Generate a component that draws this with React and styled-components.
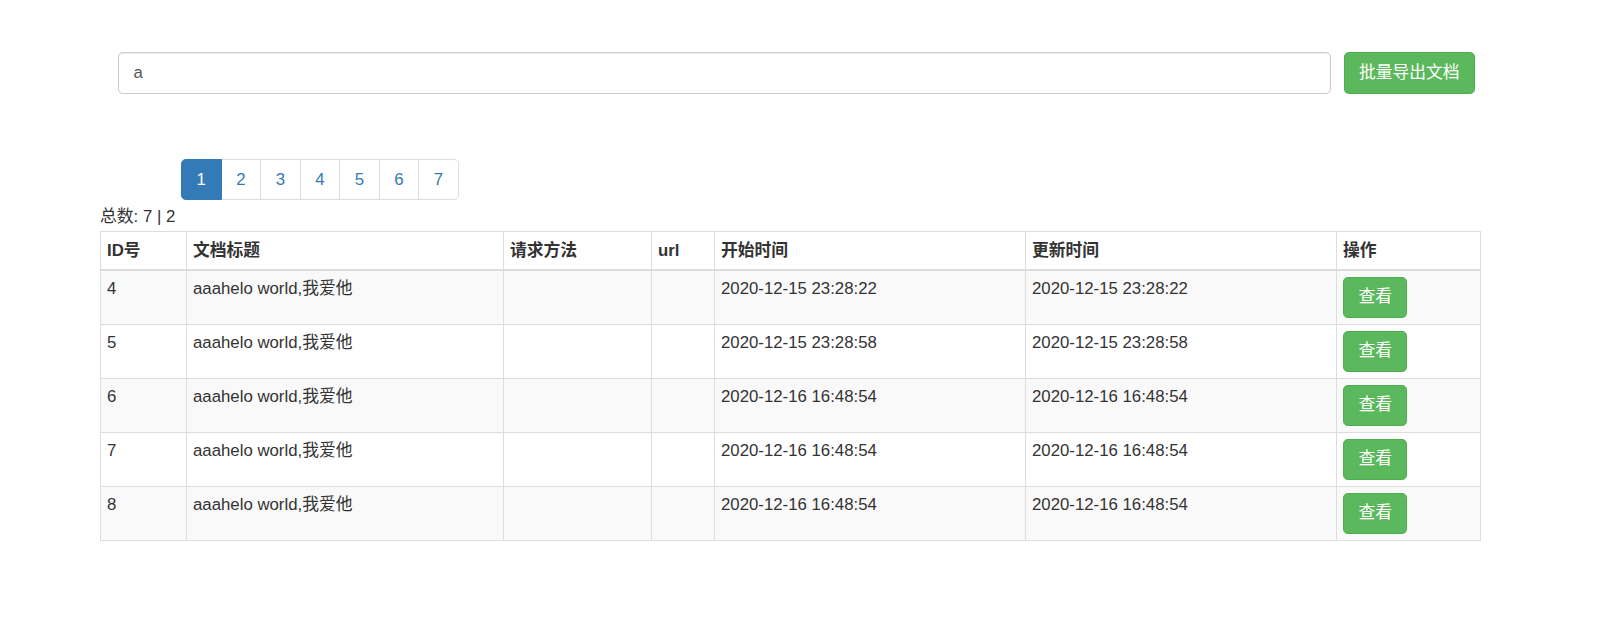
import React, { useState } from "react";
import styled, { createGlobalStyle } from "styled-components";

const GlobalStyle = createGlobalStyle`
  html, body {
    margin: 0;
    padding: 0;
    background: #fff;
  }
  body {
    font-family: "Liberation Sans", Arial, "Noto Sans CJK SC", sans-serif;
    font-size: 16.8px;
    line-height: 24px;
    color: #333;
  }
  * {
    box-sizing: border-box;
  }
`;

const Page = styled.div`
  padding-top: 52px;
  width: 1618px;
`;

const SearchRow = styled.div`
  display: flex;
  gap: 13px;
  margin-left: 118px;
  width: 1357px;
`;

const SearchInput = styled.input`
  flex: 1;
  height: 42px;
  padding: 7px 14.4px;
  font-family: inherit;
  font-size: 16.8px;
  color: #555;
  background: #fff;
  border: 1px solid #ccc;
  border-radius: 4.8px;
  box-shadow: inset 0 1px 1px rgba(0, 0, 0, 0.075);
  outline: none;

  &:focus {
    border-color: #66afe9;
  }
`;

const SuccessButton = styled.button`
  height: ${(p) => (p.$small ? "41px" : "42px")};
  padding: 0 14.4px;
  font-family: inherit;
  font-size: 16.8px;
  line-height: 24px;
  color: #fff;
  background-color: #5cb85c;
  border: 1.2px solid #4cae4c;
  border-radius: 4.8px;
  white-space: nowrap;
  cursor: pointer;

  &:hover {
    background-color: #449d44;
  }
`;

const Pagination = styled.ul`
  display: flex;
  list-style: none;
  margin: 65px 0 5px 181px;
  padding: 0;
`;

const PageItem = styled.li`
  & + & a {
    margin-left: -1px;
  }

  &:first-child a {
    border-radius: 4.8px 0 0 4.8px;
  }

  &:last-child a {
    border-radius: 0 4.8px 4.8px 0;
  }
`;

const PageLink = styled.a`
  display: block;
  height: 41px;
  padding: 7.8px 14.6px;
  line-height: 24px;
  text-decoration: none;
  cursor: pointer;
  border: 1px solid ${(p) => (p.$active ? "#337ab7" : "#ddd")};
  background: ${(p) => (p.$active ? "#337ab7" : "#fff")};
  color: ${(p) => (p.$active ? "#fff" : "#337ab7")};
  position: relative;
  z-index: ${(p) => (p.$active ? 2 : 1)};

  &:hover {
    background: ${(p) => (p.$active ? "#337ab7" : "#eee")};
  }
`;

const Total = styled.div`
  margin-left: 100px;
  line-height: 24px;
  height: 26px;
`;

const Table = styled.table`
  margin-left: 100px;
  width: 1380px;
  table-layout: fixed;
  border-collapse: collapse;
  border-spacing: 0;
  border: 1px solid #ddd;
`;

const HeadCell = styled.th`
  padding: 6px;
  height: 38px;
  text-align: left;
  font-weight: bold;
  vertical-align: bottom;
  border: 1px solid #ddd;
  border-bottom: 2px solid #ddd;
`;

const Row = styled.tr`
  background: ${(p) => (p.$striped ? "#f9f9f9" : "#fff")};
`;

const Cell = styled.td`
  padding: 6px;
  height: 54px;
  vertical-align: top;
  border: 1px solid #ddd;
`;

const columns = [
  { title: "ID号", width: 86 },
  { title: "文档标题", width: 317 },
  { title: "请求方法", width: 148 },
  { title: "url", width: 63 },
  { title: "开始时间", width: 311 },
  { title: "更新时间", width: 311 },
  { title: "操作", width: 144 },
];

const docs = [
  { id: 4, title: "aaahelo world,我爱他", start: "2020-12-15 23:28:22", update: "2020-12-15 23:28:22" },
  { id: 5, title: "aaahelo world,我爱他", start: "2020-12-15 23:28:58", update: "2020-12-15 23:28:58" },
  { id: 6, title: "aaahelo world,我爱他", start: "2020-12-16 16:48:54", update: "2020-12-16 16:48:54" },
  { id: 7, title: "aaahelo world,我爱他", start: "2020-12-16 16:48:54", update: "2020-12-16 16:48:54" },
  { id: 8, title: "aaahelo world,我爱他", start: "2020-12-16 16:48:54", update: "2020-12-16 16:48:54" },
];

export default function App() {
  const [keyword, setKeyword] = useState("a");
  const [page, setPage] = useState(1);

  return (
    <Page>
      <GlobalStyle />
      <SearchRow>
        <SearchInput value={keyword} onChange={(e) => setKeyword(e.target.value)} />
        <SuccessButton type="button">批量导出文档</SuccessButton>
      </SearchRow>

      <Pagination>
        {[1, 2, 3, 4, 5, 6, 7].map((n) => (
          <PageItem key={n}>
            <PageLink $active={n === page} onClick={() => setPage(n)}>
              {n}
            </PageLink>
          </PageItem>
        ))}
      </Pagination>

      <Total>总数: 7 | 2</Total>

      <Table>
        <colgroup>
          {columns.map((c) => (
            <col key={c.title} style={{ width: c.width }} />
          ))}
        </colgroup>
        <thead>
          <tr>
            {columns.map((c) => (
              <HeadCell key={c.title}>{c.title}</HeadCell>
            ))}
          </tr>
        </thead>
        <tbody>
          {docs.map((d, i) => (
            <Row key={d.id} $striped={i % 2 === 0}>
              <Cell>{d.id}</Cell>
              <Cell>{d.title}</Cell>
              <Cell />
              <Cell />
              <Cell>{d.start}</Cell>
              <Cell>{d.update}</Cell>
              <Cell>
                <SuccessButton type="button" $small>
                  查看
                </SuccessButton>
              </Cell>
            </Row>
          ))}
        </tbody>
      </Table>
    </Page>
  );
}
